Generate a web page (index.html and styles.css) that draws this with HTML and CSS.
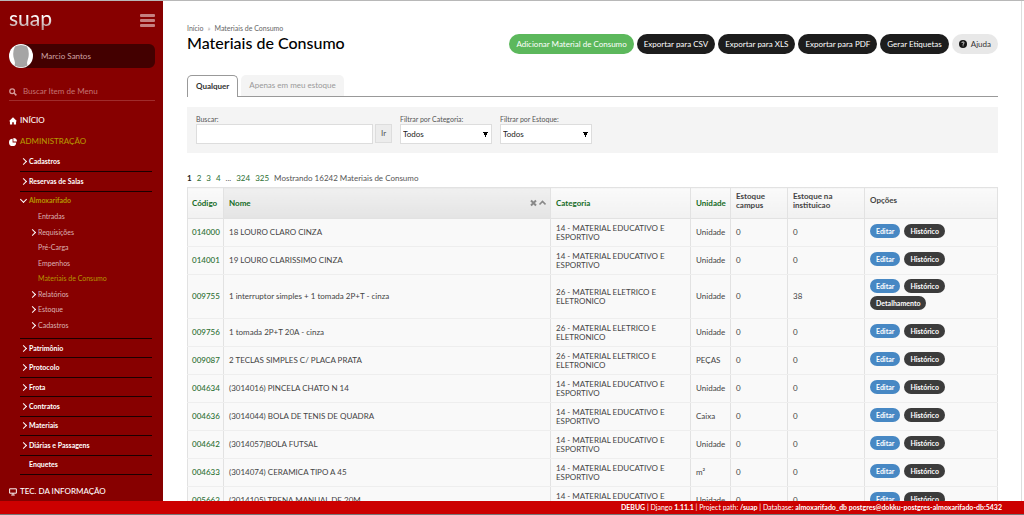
FILE: index.html
```html
<!DOCTYPE html>
<html lang="pt-br">
<head>
<meta charset="utf-8">
<title>Materiais de Consumo - suap</title>
<link rel="stylesheet" href="styles.css">
</head>
<body>
<div class="app">
  <aside class="sidebar">
    <header class="brand">
      <a class="logo" href="#">suap</a>
      <button class="burger" type="button" aria-label="Menu"><span></span><span></span><span></span></button>
    </header>
    <a class="user" href="#">
      <svg class="avatar" viewBox="0 0 24 24" aria-hidden="true"><circle cx="12" cy="12" r="12" fill="#fff"/><path d="M6 2.500Q12-.5 18 2.500Q20.500 7 19.500 13Q18.300 17 18 19L18.500 21.500Q12 25 5.500 21.500L6 19Q5.700 17 4.500 13Q3.500 7 6 2.500Z" fill="#a5a5a5"/></svg>
      <span>Marcio Santos</span>
    </a>
    <div class="menu-search">
      <svg viewBox="0 0 10 10" aria-hidden="true"><circle cx="4" cy="4" r="3" fill="none" stroke="#d59a9a" stroke-width="1.600"/><path d="M6 6L9.200 9.200" stroke="#d59a9a" stroke-width="2"/></svg>
      <input type="search" placeholder="Buscar Item de Menu" aria-label="Buscar Item de Menu">
    </div>
    <nav>
      <a class="section" href="#"><svg viewBox="0 0 10 10" aria-hidden="true"><path d="M5 .3L10 5.200H8.800V9.500H6V6.500H4V9.500H1.200V5.200H0Z" fill="#fff"/></svg>INÍCIO</a>
      <a class="section current" href="#"><svg viewBox="0 0 10 10" aria-hidden="true"><path d="M4.500 1V5.500H9A4.500 4.500 0 1 1 4.500 1Z" fill="#fff"/><path d="M5.500 0A4.500 4.500 0 0 1 10 4.500H5.500Z" fill="#fff"/></svg>ADMINISTRAÇÃO</a>
      <ul class="menu">
        <li><a class="arrow" href="#">Cadastros</a></li>
        <li><a class="arrow" href="#">Reservas de Salas</a></li>
      </ul>
      <a class="open-item" href="#">Almoxarifado</a>
      <ul class="submenu">
        <li><a href="#">Entradas</a></li>
        <li><a class="arrow" href="#">Requisições</a></li>
        <li><a href="#">Pré-Carga</a></li>
        <li><a href="#">Empenhos</a></li>
        <li><a class="current" href="#">Materiais de Consumo</a></li>
        <li><a class="arrow" href="#">Relatórios</a></li>
        <li><a class="arrow" href="#">Estoque</a></li>
        <li><a class="arrow" href="#">Cadastros</a></li>
      </ul>
      <ul class="menu menu-long">
        <li><a class="arrow" href="#">Patrimônio</a></li>
        <li><a class="arrow" href="#">Protocolo</a></li>
        <li><a class="arrow" href="#">Frota</a></li>
        <li><a class="arrow" href="#">Contratos</a></li>
        <li><a class="arrow" href="#">Materiais</a></li>
        <li><a class="arrow" href="#">Diárias e Passagens</a></li>
        <li><a href="#">Enquetes</a></li>
      </ul>
      <a class="section last" href="#"><svg viewBox="0 0 10 10" aria-hidden="true"><path d="M.8 1H9.200V6.500H.8ZM5 6.500V8.500M2.800 8.800H7.200" fill="none" stroke="#fff" stroke-width="1.200"/></svg>TEC. DA INFORMAÇÃO</a>
    </nav>
  </aside>
  <main class="content">
    <header class="page-head">
      <div>
        <div class="crumbs"><a href="#">Início</a><span class="sep">»</span><a href="#">Materiais de Consumo</a></div>
        <h1>Materiais de Consumo</h1>
      </div>
      <div class="actions">
        <a class="btn add" href="#">Adicionar Material de Consumo</a>
        <a class="btn" href="#">Exportar para CSV</a>
        <a class="btn" href="#">Exportar para XLS</a>
        <a class="btn" href="#">Exportar para PDF</a>
        <a class="btn" href="#">Gerar Etiquetas</a>
        <a class="btn help" href="#"><svg viewBox="0 0 8 8" aria-hidden="true"><circle cx="4" cy="4" r="4" fill="#151515"/><path d="M2.800 3Q3 1.800 4.100 1.900Q5.200 2 5.100 3Q5 3.700 4.100 4V4.800M4.100 5.400V6.300" fill="none" stroke="#e8e8e8" stroke-width=".9"/></svg>Ajuda</a>
      </div>
    </header>
    <div class="tabs">
      <a class="tab active" href="#">Qualquer</a>
      <a class="tab" href="#">Apenas em meu estoque</a>
    </div>
    <form class="filters">
      <div class="field search">
        <label for="q">Buscar:</label>
        <div class="line"><input id="q" type="text"><button type="button">Ir</button></div>
      </div>
      <div class="field">
        <label for="cat">Filtrar por Categoria:</label>
        <select id="cat"><option>Todos</option></select>
      </div>
      <div class="field">
        <label for="est">Filtrar por Estoque:</label>
        <select id="est"><option>Todos</option></select>
      </div>
    </form>
    <div class="pager">
      <b>1</b><a href="#">2</a><a href="#">3</a><a href="#">4</a><span>...</span><a href="#">324</a><a href="#">325</a><span class="total">Mostrando 16242 Materiais de Consumo</span>
    </div>
    <table>
      <colgroup><col class="c-code"><col><col class="c-cat"><col class="c-unit"><col class="c-campus"><col class="c-inst"><col class="c-opt"></colgroup>
      <thead>
        <tr>
          <th><a href="#">Código</a></th>
          <th class="sorted"><div class="sort"><a href="#">Nome</a><svg viewBox="0 0 16 8" aria-hidden="true"><path d="M1 1.500L6 6.500M6 1.500L1 6.500" stroke="#888" stroke-width="2"/><path d="M9.500 5.500L12.500 2.500L15.500 5.500" fill="none" stroke="#888" stroke-width="1.600"/></svg></div></th>
          <th><a href="#">Categoria</a></th>
          <th><a href="#">Unidade</a></th>
          <th class="two">Estoque campus</th>
          <th class="two">Estoque na instituicao</th>
          <th class="two">Opções</th>
        </tr>
      </thead>
      <tbody>
        <tr><td><a href="#">014000</a></td><td>18 LOURO CLARO CINZA</td><td>14 - MATERIAL EDUCATIVO E ESPORTIVO</td><td>Unidade</td><td>0</td><td>0</td><td><div class="opts"><a class="edit" href="#">Editar</a><a href="#">Histórico</a></div></td></tr>
        <tr><td><a href="#">014001</a></td><td>19 LOURO CLARISSIMO CINZA</td><td>14 - MATERIAL EDUCATIVO E ESPORTIVO</td><td>Unidade</td><td>0</td><td>0</td><td><div class="opts"><a class="edit" href="#">Editar</a><a href="#">Histórico</a></div></td></tr>
        <tr class="tall"><td><a href="#">009755</a></td><td>1 interruptor simples + 1 tomada 2P+T - cinza</td><td>26 - MATERIAL ELETRICO E ELETRONICO</td><td>Unidade</td><td>0</td><td>38</td><td><div class="opts"><a class="edit" href="#">Editar</a><a href="#">Histórico</a><a href="#">Detalhamento</a></div></td></tr>
        <tr><td><a href="#">009756</a></td><td>1 tomada 2P+T 20A - cinza</td><td>26 - MATERIAL ELETRICO E ELETRONICO</td><td>Unidade</td><td>0</td><td>0</td><td><div class="opts"><a class="edit" href="#">Editar</a><a href="#">Histórico</a></div></td></tr>
        <tr><td><a href="#">009087</a></td><td>2 TECLAS SIMPLES C/ PLACA PRATA</td><td>26 - MATERIAL ELETRICO E ELETRONICO</td><td>PEÇAS</td><td>0</td><td>0</td><td><div class="opts"><a class="edit" href="#">Editar</a><a href="#">Histórico</a></div></td></tr>
        <tr><td><a href="#">004634</a></td><td>(3014016) PINCELA CHATO N 14</td><td>14 - MATERIAL EDUCATIVO E ESPORTIVO</td><td>Unidade</td><td>0</td><td>0</td><td><div class="opts"><a class="edit" href="#">Editar</a><a href="#">Histórico</a></div></td></tr>
        <tr><td><a href="#">004636</a></td><td>(3014044) BOLA DE TENIS DE QUADRA</td><td>14 - MATERIAL EDUCATIVO E ESPORTIVO</td><td>Caixa</td><td>0</td><td>0</td><td><div class="opts"><a class="edit" href="#">Editar</a><a href="#">Histórico</a></div></td></tr>
        <tr><td><a href="#">004642</a></td><td>(3014057)BOLA FUTSAL</td><td>14 - MATERIAL EDUCATIVO E ESPORTIVO</td><td>Unidade</td><td>0</td><td>0</td><td><div class="opts"><a class="edit" href="#">Editar</a><a href="#">Histórico</a></div></td></tr>
        <tr><td><a href="#">004633</a></td><td>(3014074) CERAMICA TIPO A 45</td><td>14 - MATERIAL EDUCATIVO E ESPORTIVO</td><td>m²</td><td>0</td><td>0</td><td><div class="opts"><a class="edit" href="#">Editar</a><a href="#">Histórico</a></div></td></tr>
        <tr><td><a href="#">005663</a></td><td>(3014105) TRENA MANUAL DE 20M</td><td>14 - MATERIAL EDUCATIVO E ESPORTIVO</td><td>Unidade</td><td>0</td><td>0</td><td><div class="opts"><a class="edit" href="#">Editar</a><a href="#">Histórico</a></div></td></tr>
      </tbody>
    </table>
  </main>
</div>
<footer class="debug"><p><b>DEBUG</b> | Django <b>1.11.1</b> | Project path: <b>/suap</b> | Database: <b>almoxarifado_db postgres@dokku-postgres-almoxarifado-db:5432</b></p></footer>
</body>
</html>
```
FILE: styles.css
```css
* { box-sizing: border-box; }
body {
  margin: 0;
  height: 100vh;
  display: flex;
  flex-direction: column;
  overflow: hidden;
  font: 8px/9px Lato, sans-serif;
  color: #444;
  background: #fff;
}
a { color: inherit; text-decoration: none; }
ul { list-style: none; margin: 0; padding: 0; }
input, button, select { font: inherit; color: inherit; }

.app {
  flex: 1;
  min-height: 0;
  display: flex;
  overflow: hidden;
  border-top: 1px solid #b8b8b8;
}

/* Sidebar */
.sidebar {
  flex: none;
  width: 163px;
  padding: 0 8px 0 9px;
  background: #870000;
  color: #fff;
}
.brand {
  display: flex;
  justify-content: space-between;
  align-items: center;
  height: 38px;
}
.logo {
  padding-bottom: 4px;
  font-size: 21px;
  line-height: 24px;
  font-weight: 500;
  color: transparent;
  background: linear-gradient(#fff 35%, #b89c9c 80%);
  background-clip: text;
}
.burger {
  display: flex;
  flex-direction: column;
  gap: 2px;
  width: 15px;
  padding: 0;
  border: 0;
  background: none;
}
.burger span { height: 3px; background: #c58080; border-radius: 1px; }
.user {
  display: flex;
  align-items: center;
  gap: 8px;
  height: 24px;
  margin-top: 5px;
  border-radius: 12px 6px 6px 12px;
  background: #430000;
  color: #cfa5a5;
}
.avatar { width: 24px; height: 24px; }
.menu-search {
  display: flex;
  align-items: center;
  gap: 6px;
  height: 18px;
  margin-top: 15px;
  border-bottom: 1px solid #a02c2c;
}
.menu-search svg { width: 8px; height: 8px; }
.menu-search input {
  flex: 1;
  min-width: 0;
  padding: 0;
  border: 0;
  outline: 0;
  background: none;
}
.menu-search input::placeholder { color: #c47474; opacity: 1; }
nav { padding-top: 9px; }
.section {
  display: flex;
  align-items: center;
  gap: 3px;
  height: 21px;
  font-weight: 500;
}
.section svg { width: 8px; height: 8px; }
.section.current, .open-item, .submenu .current { color: #b59600; }
.menu {
  display: grid;
  grid-auto-rows: 1fr;
  height: 40px;
  margin: 0 3px 0 11px;
}
.menu li {
  display: flex;
  align-items: center;
  border-bottom: 1px solid #1c0000;
}
.menu a, .open-item { padding-left: 9px; font-size: 7px; font-weight: 700; }
.open-item {
  display: flex;
  align-items: center;
  height: 17px;
  margin-left: 11px;
}
.arrow, .open-item { position: relative; }
.arrow::before, .open-item::before {
  content: "";
  position: absolute;
  left: 1px;
  top: 2px;
  width: 4px;
  height: 4px;
  border: solid #fff;
  border-width: 1px 1px 0 0;
  transform: rotate(45deg);
}
.open-item::before { top: 5px; transform: rotate(135deg); }
.submenu {
  display: grid;
  grid-auto-rows: 1fr;
  height: 124px;
  margin-left: 20px;
}
.submenu li { display: flex; align-items: center; }
.submenu a { padding-left: 9px; font-size: 7px; color: #dcb3b3; }
.menu-long {
  height: 137px;
  margin-top: 5px;
  border-top: 1px solid #1c0000;
}
.last { margin-top: 6px; }

/* Content */
.content {
  flex: 1;
  min-width: 0;
  margin-right: 2px;
  padding: 22px 23px 0 24px;
  border-right: 1px solid #ddd;
}
.page-head {
  display: flex;
  justify-content: space-between;
  align-items: flex-end;
}
.crumbs { display: flex; gap: 4px; font-size: 7px; line-height: 10px; color: #666; }
.sep { color: #aaa; }
h1 { margin: 0; font-size: 16px; line-height: 20px; font-weight: 500; color: #000; }
.actions { display: flex; gap: 3px; margin-bottom: -1px; }
.btn {
  display: flex;
  align-items: center;
  gap: 4px;
  height: 20px;
  padding: 0 7px;
  border-radius: 10px;
  background: #1d1d1d;
  color: #fff;
  white-space: nowrap;
}
.btn.add { background: #5cb85c; }
.btn.help { background: #e8e8e8; color: #333; }
.btn svg { width: 8px; height: 8px; }
.tabs {
  display: flex;
  gap: 3px;
  height: 22px;
  margin-top: 22px;
  border-bottom: 1px solid #999;
}
.tab {
  display: flex;
  align-items: center;
  padding: 0 8px;
  border-radius: 5px 5px 0 0;
  background: #f4f4f4;
  color: #999;
}
.tab.active {
  height: 22px;
  border: 1px solid #999;
  border-bottom: 0;
  background: #fff;
  color: #333;
  font-weight: 700;
}
.filters {
  display: flex;
  gap: 8px;
  margin-top: 10px;
  padding: 8px 9px 9px;
  background: #f4f4f4;
}
.field { width: 92px; }
.field.search { width: 196px; }
.field label { display: block; font-size: 7px; color: #555; }
.line { display: flex; gap: 2px; }
.line input {
  flex: 1;
  min-width: 0;
  height: 20px;
  border: 1px solid #ddd;
  background: #fff;
}
.line button {
  width: 17px;
  height: 19px;
  padding: 0;
  border: 1px solid #ddd;
  background: #ececec;
  color: #555;
}
select {
  appearance: none;
  display: block;
  width: 100%;
  height: 20px;
  padding: 0 2px;
  border: 1px solid #ddd;
  border-radius: 0;
  color: #222;
  background: #fff;
  background-image: conic-gradient(from -27deg at 50% 100%, #000 54deg, transparent 0);
  background-repeat: no-repeat;
  background-size: 5px 5px;
  background-position: right 3px center;
}
.pager { display: flex; gap: 5px; margin-top: 20px; line-height: 10px; color: #555; }
.pager a, th a, td a { color: #2c6f33; }
.pager b { color: #222; }

table {
  width: 100%;
  margin-top: 4px;
  table-layout: fixed;
  border-collapse: collapse;
  border: 1px solid #e2e2e2;
}
.c-code { width: 36px; }
.c-cat { width: 140px; }
.c-unit { width: 40px; }
.c-campus { width: 57px; }
.c-inst { width: 77px; }
.c-opt { width: 133px; }
th, td { padding: 0 4px 0 5px; border-right: 1px solid #e2e2e2; text-align: left; }
th {
  height: 31px;
  background: linear-gradient(#fafafa, #f1f1f1);
  border-bottom: 1px solid #e2e2e2;
}
th.sorted { background: linear-gradient(#f0f0f0, #e4e4e4); }
th a { color: #146b1f; }
th.two { padding-bottom: 5px; }
.sort { display: flex; justify-content: space-between; }
.sort svg { width: 16px; height: 8px; }
th:first-child, td:first-child { padding: 0 0 0 4px; }
td { height: 28px; background: #f9f9f9; border-bottom: 1px solid #eee; }
td:first-child { font-weight: 500; }
.tall td { height: 44px; }
.opts { display: flex; flex-wrap: wrap; gap: 3px 4px; padding-bottom: 4px; }
.opts a {
  height: 14px;
  padding: 0 6px;
  border-radius: 7px;
  background: #3c3c3c;
  color: #fff;
  font-size: 7px;
  line-height: 14px;
  font-weight: 700;
}
.opts .edit { background: #4788c4; }

.debug {
  position: relative;
  flex: none;
  height: 14px;
  padding: 0 22px;
  border-bottom: 1px solid #777;
  background: #c00;
  color: #fff;
  font-size: 7px;
  line-height: 13px;
  text-align: right;
}
.debug p { margin: 0; }
```
